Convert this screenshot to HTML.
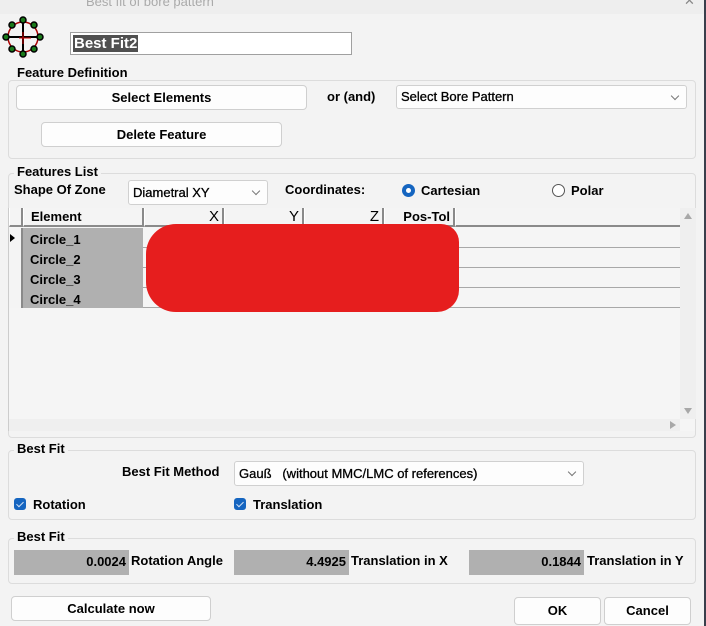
<!DOCTYPE html>
<html><head><meta charset="utf-8"><style>
*{box-sizing:border-box}
body{margin:0;width:706px;height:626px;background:#f3f3f3;font-family:"Liberation Sans",Arial,sans-serif;font-size:13px;font-weight:bold;color:#000;position:relative;overflow:hidden}
.a{position:absolute}
.grp{position:absolute;border:1px solid #dcdcdc;border-radius:4px}
.lg{position:absolute;background:#f3f3f3;padding:0 3px;font-size:13px;line-height:14px}
.btn{position:absolute;background:#fdfdfd;border:1px solid #cfcfcf;border-radius:4px;text-align:center}
.cmb{position:absolute;background:#fdfdfd;border:1px solid #d0d0d0;border-radius:3px;padding-left:4px;font-weight:normal;-webkit-text-stroke:0.3px #000}
.cmb:after{content:"";position:absolute;right:8px;top:7px;width:5px;height:5px;border-right:1px solid #777;border-bottom:1px solid #777;transform:rotate(45deg)}
.fld{position:absolute;background:#b0b0b0;text-align:right;padding-right:3px;line-height:24px}
.chk{position:absolute;width:12px;height:12px;background:#1565c0;border-radius:3px}
.chk:after{content:"";position:absolute;left:4px;top:2px;width:3px;height:6px;border-right:1px solid #cfe0f5;border-bottom:1px solid #cfe0f5;transform:rotate(45deg)}
.hc{position:absolute;top:0;height:19px;background:#f4f4f4;border-right:2px solid #8a8a8a;border-bottom:2px solid #8a8a8a;border-left:1px solid #fff;line-height:17px}
.rw{position:absolute;left:0;width:671px;height:20px;border-bottom:1px solid #a8a8a8}
</style></head><body>
<div class="a" style="left:0;top:0;width:704px;height:14px;background:#eeeeee"></div>
<div class="a" style="left:86px;top:-6px;color:#aaa;font-weight:normal;font-size:13px">Best fit of bore pattern</div>
<div class="a" style="left:684px;top:-7px;color:#888;font-weight:normal">✕</div>
<div class="a" style="left:704px;top:0;width:2px;height:626px;background:#3a3f4c"></div>
<svg class="a" style="left:1px;top:15px" width="44" height="44" viewBox="0 0 44 44">
<circle cx="22" cy="22" r="15" fill="none" stroke="#a00" stroke-width="1.5"/>
<line x1="22" y1="4" x2="22" y2="40" stroke="#000" stroke-width="2"/><line x1="4" y1="22" x2="40" y2="22" stroke="#000" stroke-width="2"/>
<line x1="22" y1="17" x2="22" y2="29" stroke="#c00"/><line x1="18" y1="23" x2="30" y2="23" stroke="#c00"/>
<g fill="#1a7a1a" stroke="#000" stroke-width="1.5"><circle cx="22" cy="5" r="3"/><circle cx="22" cy="39" r="3"/><circle cx="5" cy="22" r="3"/><circle cx="39" cy="22" r="3"/><circle cx="11" cy="10" r="3"/><circle cx="33" cy="10" r="3"/><circle cx="11" cy="34" r="3"/><circle cx="33" cy="34" r="3"/></g></svg>
<div class="a" style="left:70px;top:32px;width:282px;height:23px;background:#fff;border:1px solid #a0a0a0"><span style="position:absolute;left:2px;top:2px;background:#505050;color:#fff;font-size:15px;line-height:17px;padding:0 1px">Best Fit2</span></div>

<div class="grp" style="left:8px;top:80px;width:688px;height:79px"></div>
<div class="lg" style="left:14px;top:66px">Feature Definition</div>
<div class="btn" style="left:16px;top:85px;width:291px;height:25px;line-height:23px">Select Elements</div>
<div class="a" style="left:327px;top:89px">or (and)</div>
<div class="cmb" style="left:396px;top:85px;width:291px;height:24px;line-height:22px">Select Bore Pattern</div>
<div class="btn" style="left:41px;top:122px;width:241px;height:25px;line-height:23px">Delete Feature</div>

<div class="grp" style="left:8px;top:173px;width:688px;height:265px"></div>
<div class="lg" style="left:14px;top:165px">Features List</div>
<div class="a" style="left:14px;top:182px">Shape Of Zone</div>
<div class="cmb" style="left:128px;top:180px;width:140px;height:25px;line-height:23px">Diametral XY</div>
<div class="a" style="left:285px;top:182px">Coordinates:</div>
<div class="a" style="left:402px;top:184px;width:13px;height:13px;border-radius:50%;background:#1565c0"><div class="a" style="left:4px;top:4px;width:5px;height:5px;border-radius:50%;background:#fff"></div></div>
<div class="a" style="left:421px;top:183px">Cartesian</div>
<div class="a" style="left:552px;top:184px;width:13px;height:13px;border-radius:50%;border:1px solid #555;background:#fff"></div>
<div class="a" style="left:571px;top:183px">Polar</div>

<div class="a" style="left:8px;top:208px;width:687px;height:223px;background:#f5f5f5;border-left:1px solid #ccc">
 <div class="hc" style="left:0;width:14px"></div>
 <div class="hc" style="left:14px;width:121px;padding-left:7px">Element</div>
 <div class="hc" style="left:135px;width:80px;text-align:right;padding-right:3px;font-weight:normal;font-size:15px">X</div>
 <div class="hc" style="left:215px;width:80px;text-align:right;padding-right:3px;font-weight:normal;font-size:15px">Y</div>
 <div class="hc" style="left:295px;width:80px;text-align:right;padding-right:3px;font-weight:normal;font-size:15px">Z</div>
 <div class="hc" style="left:375px;width:71px;text-align:right;padding-right:3px">Pos-Tol</div>
 <div class="hc" style="left:446px;width:225px;border-right:none"></div>
 <div class="rw" style="top:20px"></div><div class="rw" style="top:40px"></div><div class="rw" style="top:60px"></div><div class="rw" style="top:80px"></div>
 <div class="a" style="left:0;top:20px;width:14px;height:80px;background:#f4f4f4;border-right:2px solid #8a8a8a"></div>
 <div class="a" style="left:1px;top:26px;width:0;height:0;border-left:5px solid #000;border-top:4px solid transparent;border-bottom:4px solid transparent"></div>
 <div class="a" style="left:14px;top:20px;width:120px;height:80px;background:#b0b0b0"></div>
 <div class="a" style="left:21px;top:22px;line-height:20px">Circle_1<br>Circle_2<br>Circle_3<br>Circle_4</div>
 <div class="a" style="left:671px;top:0;width:16px;height:211px;background:#efefef"></div>
 <div class="a" style="left:675px;top:5px;border-bottom:6px solid #a8a8a8;border-left:4px solid transparent;border-right:4px solid transparent"></div>
 <div class="a" style="left:675px;top:200px;border-top:6px solid #a8a8a8;border-left:4px solid transparent;border-right:4px solid transparent"></div>
 <div class="a" style="left:0;top:211px;width:671px;height:12px;background:#efefef"></div>
 <div class="a" style="left:661px;top:213px;border-left:6px solid #a8a8a8;border-top:4px solid transparent;border-bottom:4px solid transparent"></div>
</div>
<div class="a" style="left:146px;top:224px;width:313px;height:88px;background:#e61e1e;border-radius:30px 18px 22px 30px"></div>

<div class="grp" style="left:8px;top:450px;width:688px;height:70px"></div>
<div class="lg" style="left:14px;top:442px">Best Fit</div>
<div class="a" style="left:122px;top:464px">Best Fit Method</div>
<div class="cmb" style="left:234px;top:461px;width:350px;height:25px;line-height:23px">Gauß &nbsp;&nbsp;(without MMC/LMC of references)</div>
<div class="chk" style="left:14px;top:498px"></div><div class="a" style="left:33px;top:497px">Rotation</div>
<div class="chk" style="left:234px;top:498px"></div><div class="a" style="left:253px;top:497px">Translation</div>

<div class="grp" style="left:8px;top:538px;width:688px;height:46px"></div>
<div class="lg" style="left:14px;top:530px">Best Fit</div>
<div class="fld" style="left:14px;top:550px;width:115px;height:25px">0.0024</div><div class="a" style="left:131px;top:553px">Rotation Angle</div>
<div class="fld" style="left:234px;top:550px;width:115px;height:25px">4.4925</div><div class="a" style="left:351px;top:553px">Translation in X</div>
<div class="fld" style="left:469px;top:550px;width:115px;height:25px">0.1844</div><div class="a" style="left:587px;top:553px">Translation in Y</div>

<div class="btn" style="left:11px;top:596px;width:200px;height:25px;line-height:23px">Calculate now</div>
<div class="btn" style="left:514px;top:597px;width:87px;height:28px;line-height:26px">OK</div>
<div class="btn" style="left:604px;top:597px;width:87px;height:28px;line-height:26px">Cancel</div>
</body></html>
